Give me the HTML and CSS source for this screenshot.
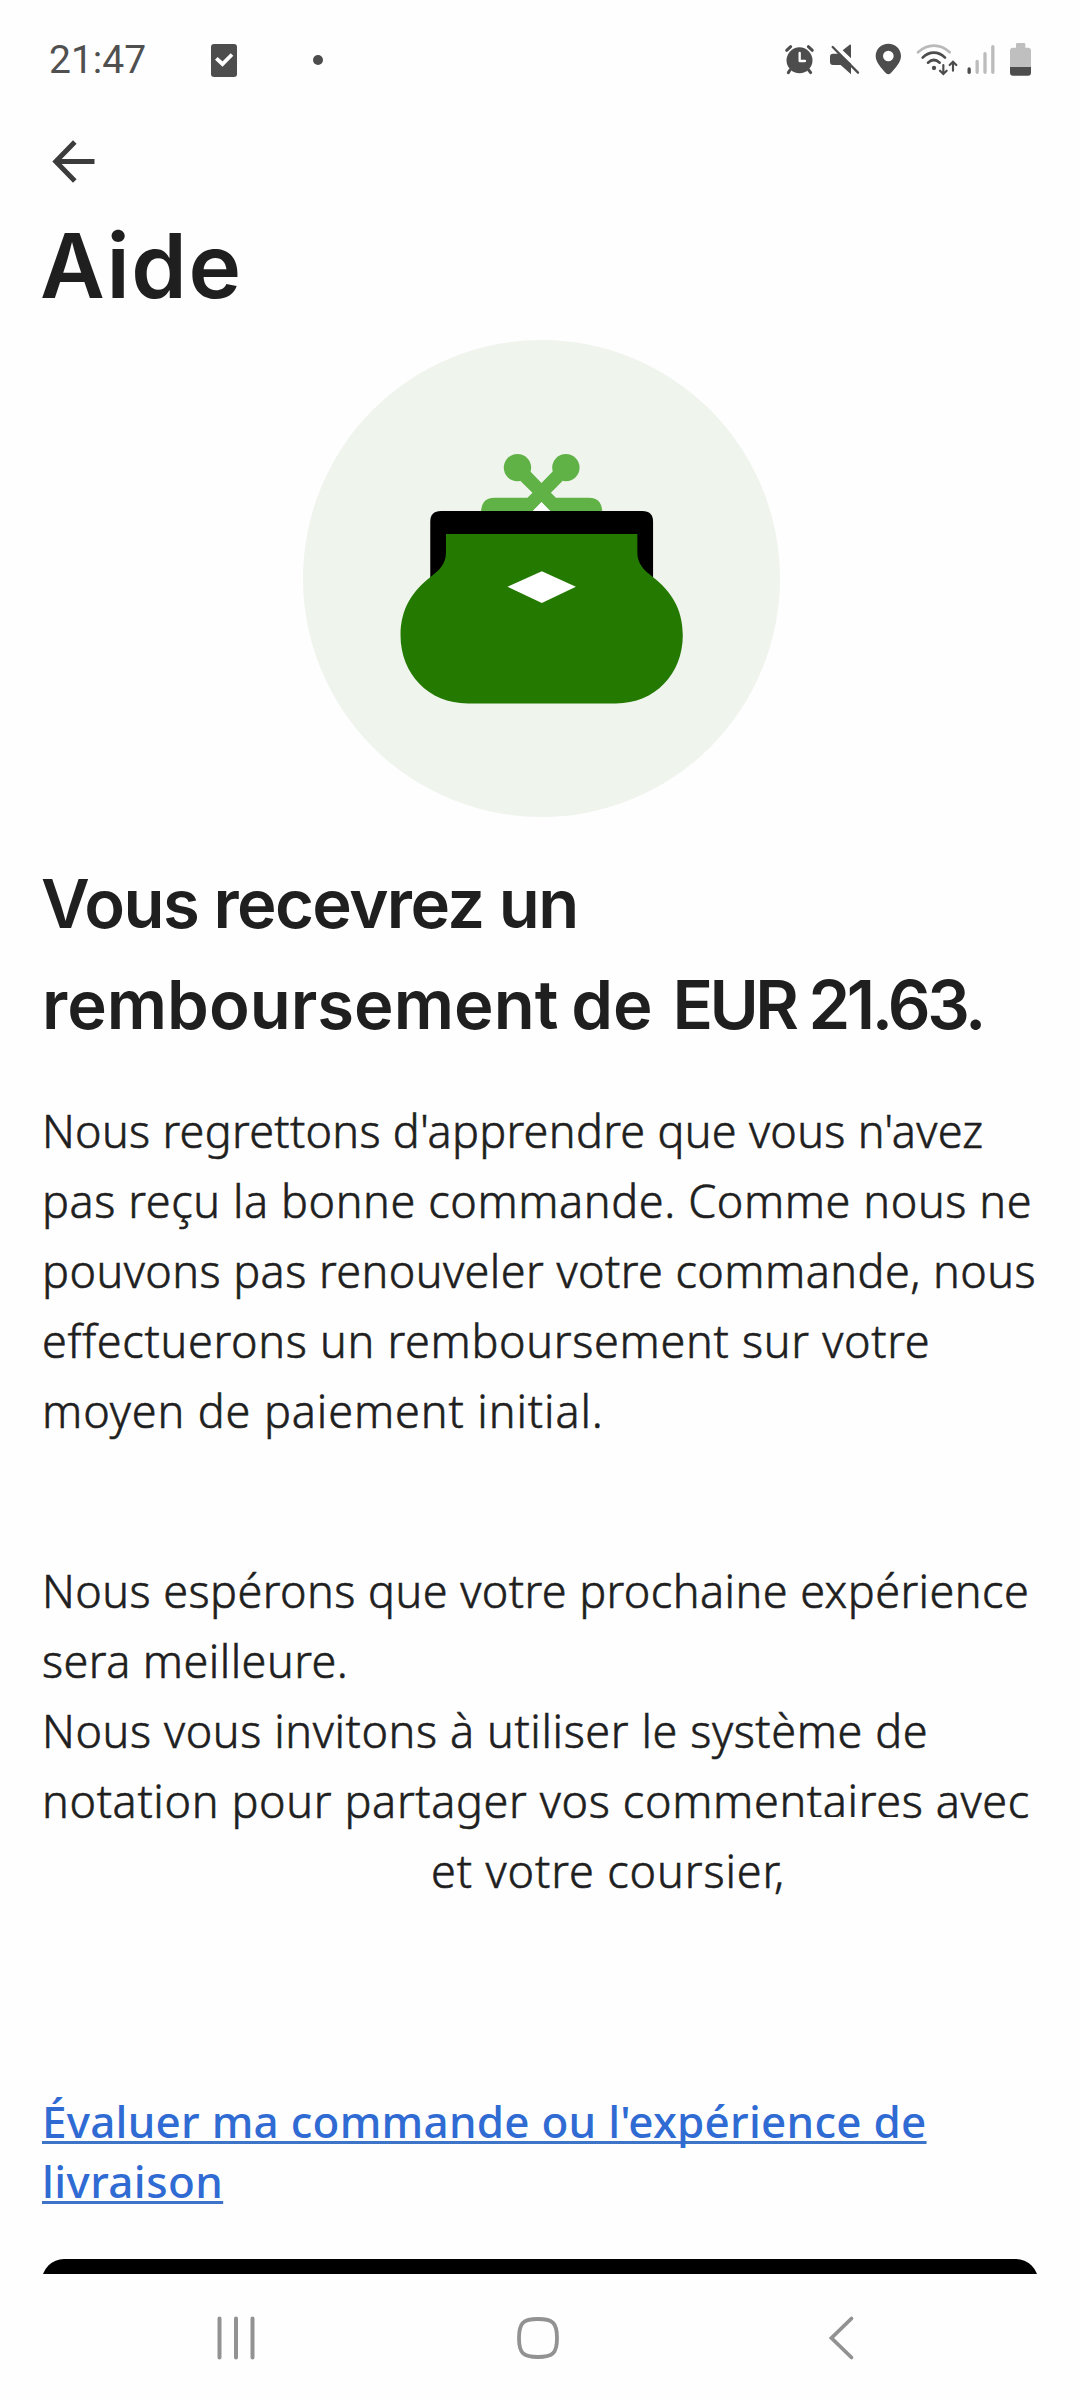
FILE: index.html
```
<!DOCTYPE html>
<html lang="fr">
<head>
<meta charset="utf-8">
<title>Aide</title>
<link rel="stylesheet" href="styles.css">
</head>
<body>
<div class="screen">
  <header class="status">
    <span class="clock">21:47</span>
    <svg class="task" width="28" height="36" viewBox="0 0 28 36"><rect x="1" y="2" width="26" height="33" rx="3" fill="#4d4d4d"/><path d="M6.300 16.300 12.500 22 22 12.500" fill="none" stroke="#fff" stroke-width="3.800"/></svg>
    <span class="dot"></span>
    <div class="tray">
      <svg width="45" height="40" viewBox="60 60 135 120"><g fill="none" stroke="#4d4d4d" stroke-width="9" stroke-linecap="round"><path d="M80 91 92 80M145 80l12 11M90 150l-5 8M146 150l6 8"/></g><circle cx="118.500" cy="121" r="39" fill="#4d4d4d"/><path d="M119 99v24h16" fill="none" stroke="#fff" stroke-width="7" stroke-linecap="round" stroke-linejoin="round"/></svg>
      <svg width="45" height="40" viewBox="195 60 135 120"><path d="M219 101h20l34 30v32l-31-28h-23q-9 0-9-9v-16q0-9 9-9zM248 91l21-17q4-2 4 2v39z" fill="#4d4d4d"/><path d="M218 81 294 158" stroke="#4d4d4d" stroke-width="7" stroke-linecap="round"/></svg>
      <svg width="40" height="40" viewBox="330 60 120 120"><path fill-rule="evenodd" d="M385 71c21 0 38 16 38 37 0 18-16 35-31 52q-7 6-14 0c-15-17-31-34-31-52 0-21 17-37 38-37zm0 21a16 16 0 1 0 0 32 16 16 0 0 0 0-32z" fill="#4d4d4d"/></svg>
      <svg width="52" height="40" viewBox="450 60 156 120"><g fill="none" stroke-width="8" stroke-linecap="round"><path d="M474 97c29-27 67-27 95 0" stroke="#b9b9b9"/><g stroke="#4d4d4d"><path d="M488 113c20-20 47-20 67 0M504 128c11-10 24-10 35 0"/><path d="M550 135v26M540 152l10 10 10-10M579 152v-26M569 135l10-10 10 10" stroke-width="6.500"/></g></g><circle cx="522" cy="144" r="6.500" fill="#4d4d4d"/></svg>
      <svg width="43" height="40" viewBox="606 60 129 120"><g fill="none" stroke="#bcbcbc" stroke-width="10" stroke-linecap="round"><path d="M627.500 147v10" stroke="#4d4d4d"/><path d="M651.500 124v33M675 101v56M698.500 80v77"/></g></svg>
      <svg width="35" height="40" viewBox="735 60 105 120"><path d="M772 69h20q4 0 4 4v10h8q9 0 9 9v50h-63V92q0-9 9-9h9V73q0-4 4-4z" fill="#bfbfbf"/><path d="M750 141h63v17q0 9-9 9h-45q-9 0-9-9z" fill="#4d4d4d"/></svg>
    </div>
  </header>

  <main class="content">
    <div class="toolbar">
      <svg width="44" height="44" viewBox="0 0 44 44"><path d="M42.500 21.500H5M22.800 2 3.800 21.500l19 19.500" fill="none" stroke="#3c3c3c" stroke-width="5"/></svg>
    </div>
    <h1 class="title">Aide</h1>

    <svg class="purse" width="477" height="477" viewBox="40 31 1428 1428">
      <circle cx="754" cy="745" r="714" fill="#eff4ed"/>
      <g fill="#60b246">
        <circle cx="682" cy="413" r="41"/>
        <circle cx="827" cy="413" r="41"/>
        <path d="M573 545q2-42 40-42h99l15-15-36-35 29-29 34 35 34-35 29 29-35 35 15 15h99q38 0 40 42H782l-28-29-28 29z"/>
      </g>
      <path d="M726 545 754 517l28 28z" fill="#fff"/>
      <path d="M421 750V575q0-32 32-32h603q32 0 32 32v175z" fill="#000"/>
      <path d="M468 612h573v55c0 35 20 53 47 74 52 41 89 92 89 174 0 116-83 204-200 204H533c-117 0-201-88-201-204 0-82 37-133 89-174 27-21 47-39 47-74z" fill="#247900"/>
      <path d="M652 770 755 723l102 47-102 48z" fill="#fff"/>
    </svg>

    <h2 class="headline"><span class="line first">Vous recevrez un</span> <span class="line amount">remboursement de <span class="currency">EUR</span> <span class="digits">21.63.</span></span></h2>

    <p class="text">
      <span class="line ls30">Nous regrettons d'apprendre que vous n'avez</span>
      <span class="line ls60">pas reçu la bonne commande. Comme nous ne</span>
      <span class="line ls45">pouvons pas renouveler votre commande, nous</span>
      <span class="line ls70">effectuerons un remboursement sur votre</span>
      <span class="line ls90">moyen de paiement initial.</span>
    </p>
    <p class="text second">
      <span class="line ls45">Nous espérons que votre prochaine expérience</span>
      <span class="line ls45">sera meilleure.</span>
      <span class="line ls60">Nous vous invitons à utiliser le système de</span>
      <span class="line ls65 masked">notation pour partager vos commentaires avec</span>
      <span class="line ls90 indent">et votre coursier,</span>
    </p>

    <a class="link"><span class="line"><span class="u ls25">Évaluer ma commande ou l'expérience de</span></span> <span class="line"><span class="u ls40">livraison</span></span></a>

    <div class="peek"><div class="button"></div></div>
  </main>

  <nav class="nav">
    <svg width="42" height="46" viewBox="0 0 42 46"><path d="M4.500 3.500v39M21 3.500v39M37.500 3.500v39" fill="none" stroke="#929292" stroke-width="4" stroke-linecap="round"/></svg>
    <svg class="home" width="46" height="46" viewBox="0 0 46 46"><path d="M23 4C8 4 4 8 4 23s4 19 19 19 19-4 19-19S38 4 23 4z" fill="none" stroke="#929292" stroke-width="3.800"/></svg>
    <svg width="28" height="46" viewBox="0 0 28 46"><path d="M24.500 3.500 4.500 23l20 19.500" fill="none" stroke="#929292" stroke-width="3.800" stroke-linecap="round"/></svg>
  </nav>
</div>
</body>
</html>
```
FILE: styles.css
```
* { box-sizing: border-box; }
body { margin: 0; background: #fefefe; }
svg { display: block; flex: none; }

.screen {
  width: 1080px;
  height: 2400px;
  display: flex;
  flex-direction: column;
  overflow: hidden;
  background: #fefefe;
  color: #1f1f1f;
  font-family: "Noto Sans", sans-serif;
}

.status {
  height: 120px;
  display: flex;
  align-items: center;
  padding: 0 40px 0 49px;
  color: #505050;
}
.clock {
  width: 161px;
  font: 400 39px/46px Roboto, sans-serif;
}
.dot {
  width: 10px;
  height: 10px;
  margin-left: 75px;
  border-radius: 50%;
  background: #4d4d4d;
}
.tray { display: flex; margin-left: auto; }

.content {
  height: 2154px;
  display: flex;
  flex-direction: column;
  padding: 0 42px;
}
.toolbar {
  height: 92px;
  padding: 20px 0 0 10px;
}
.title {
  margin: 0 0 0 -2px;
  font: 600 89px/108px Inter, sans-serif;
  letter-spacing: 1.5px;
}
.purse { margin: 20px 0 36px 261px; }

.line { display: block; white-space: nowrap; }
.headline {
  margin: 0 0 41px;
  font: 600 67px/101px Inter, sans-serif;
}
.first { margin-left: -1px; letter-spacing: -1.6px; }
.amount { word-spacing: -4px; }
.currency { margin-left: 7px; letter-spacing: -3.5px; }
.digits { letter-spacing: -3.4px; }

.text {
  margin: 0;
  font-size: 45px;
  font-weight: 300;
  line-height: 70px;
  -webkit-text-stroke: 0.6px #1f1f1f;
}
.second { margin-top: 110px; }
.ls25 { letter-spacing: 0.25px; }
.ls30 { letter-spacing: 0.3px; }
.ls40 { letter-spacing: 0.4px; }
.ls45 { letter-spacing: 0.45px; }
.ls60 { letter-spacing: 0.6px; }
.ls65 { letter-spacing: 0.65px; }
.ls70 { letter-spacing: 0.7px; }
.ls90 { letter-spacing: 0.9px; }
.indent { padding-left: 389px; }

.masked { position: relative; }
.masked::after {
  content: "";
  position: absolute;
  left: 736px;
  top: 51px;
  width: 121px;
  height: 19px;
  background: #fefefe;
}

.link {
  margin-top: 185px;
  color: #2f6bd3;
  font-size: 44px;
  font-weight: 500;
  line-height: 60px;
}
.u {
  text-decoration: underline #3d74c8 3px;
  text-underline-offset: 3px;
  text-decoration-skip-ink: none;
}

.peek {
  height: 15px;
  margin-top: 48px;
  flex: none;
  overflow: hidden;
}
.button {
  height: 60px;
  border-radius: 22px;
  background: #000;
}

.nav {
  height: 126px;
  display: flex;
  align-items: center;
  justify-content: space-between;
  padding: 2px 225px 0 215px;
}
.home { margin-right: 9px; }
```
